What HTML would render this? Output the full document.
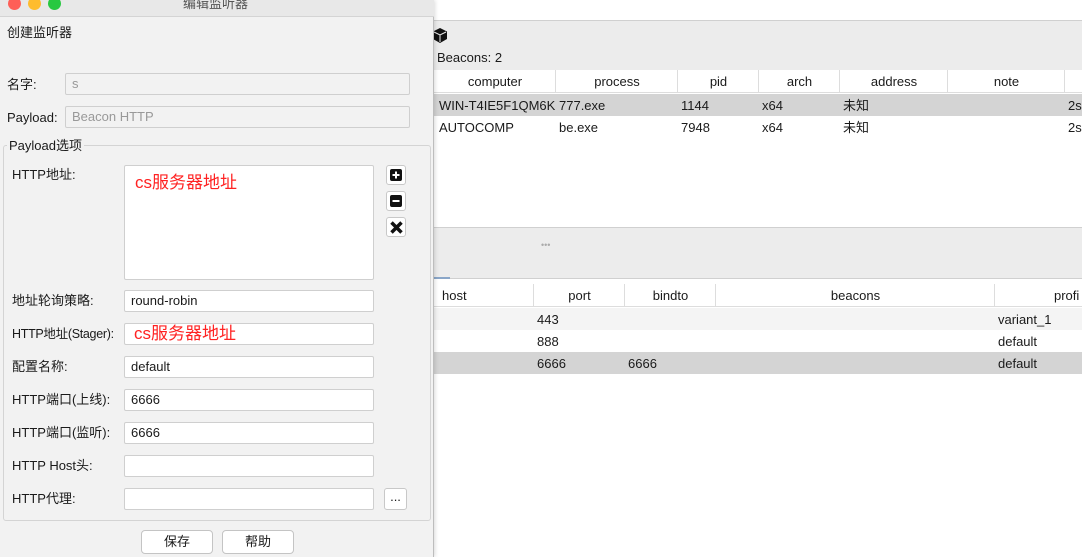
<!DOCTYPE html><html><head><meta charset="utf-8"><style>
*{box-sizing:border-box;margin:0;padding:0}
body{width:1082px;height:557px;overflow:hidden;position:relative;background:#fff;font-family:"Liberation Sans","Noto Sans CJK SC",sans-serif;font-size:13px;line-height:16px;color:#1a1a1a}
.a{position:absolute}
.hd{position:absolute;height:23px;background:#fff;border-bottom:1px solid #ddd}
.hd span,.r span{position:absolute;top:4px;line-height:15px}
.hd span{text-align:center}
.col{border-right:1px solid #ddd;height:23px;top:0}
.r{position:absolute;left:434px;right:0;height:22px}
.in{position:absolute;left:124px;width:250px;height:22px;background:#fff;border:1px solid #cfcfcf;border-radius:2px;padding:2px 6px}
.lb{position:absolute;left:12px}
.ib{position:absolute;left:386px;width:20px;height:20px;border:1px solid #c8c8c8;border-radius:3px;background:#fff}
.ib i{position:absolute;left:3px;top:3px;width:12px;height:12px;background:#111;border-radius:2px}
.btn{position:absolute;top:530px;width:72px;height:24px;background:#fff;border:1px solid #c4c4c4;border-radius:4px;text-align:center;line-height:22px}
.red{color:#f22;font-size:17px;line-height:20px}
</style></head><body>
<div class="a" style="left:434px;top:0;right:0;height:21px;background:#fff;border-bottom:1px solid #d0d0d0"></div>
<div class="a" style="left:434px;top:21px;right:0;height:49px;background:#ececec"></div>
<svg class="a" style="left:433px;top:28px" width="14" height="15" viewBox="0 0 14 15"><path d="M7 0L14 3.5V11L7 15L0 11V3.5Z" fill="#111"/><path d="M1 4L7 7L13 4M7 7V14" stroke="#ececec" stroke-width="1" fill="none"/></svg>
<div class="a" style="left:437px;top:50px">Beacons: 2</div>
<div class="hd" style="left:434px;top:70px;right:0">
<span style="left:0;width:122px">computer</span><span style="left:122px;width:122px">process</span><span style="left:244px;width:81px">pid</span><span style="left:325px;width:81px">arch</span><span style="left:406px;width:108px">address</span><span style="left:514px;width:117px">note</span>
<div class="a col" style="left:121px"></div><div class="a col" style="left:243px"></div><div class="a col" style="left:324px"></div><div class="a col" style="left:405px"></div><div class="a col" style="left:513px"></div><div class="a col" style="left:630px"></div>
</div>
<div class="r" style="top:94px;background:#d4d4d4"><span style="left:5px">WIN-T4IE5F1QM6K</span><span style="left:125px">777.exe</span><span style="left:247px">1144</span><span style="left:328px">x64</span><span style="left:409px">未知</span><span style="left:634px">2s</span></div>
<div class="r" style="top:116px"><span style="left:5px">AUTOCOMP</span><span style="left:125px">be.exe</span><span style="left:247px">7948</span><span style="left:328px">x64</span><span style="left:409px">未知</span><span style="left:634px">2s</span></div>
<div class="a" style="left:434px;top:227px;right:0;height:52px;background:#ececec;border-top:1px solid #d0d0d0;border-bottom:1px solid #d0d0d0"></div>
<div class="a" style="left:541px;top:237px;color:#aaa;font-size:9px">•••</div>
<div class="a" style="left:434px;top:277px;width:16px;height:2px;background:#8aa6c8"></div>
<div class="hd" style="left:434px;top:284px;right:0">
<span style="left:8px">host</span><span style="left:100px;width:91px">port</span><span style="left:191px;width:91px">bindto</span><span style="left:282px;width:279px">beacons</span><span style="left:620px">profi</span>
<div class="a col" style="left:99px"></div><div class="a col" style="left:190px"></div><div class="a col" style="left:281px"></div><div class="a col" style="left:560px"></div>
</div>
<div class="r" style="top:308px;background:#f4f4f4"><span style="left:103px">443</span><span style="left:564px">variant_1</span></div>
<div class="r" style="top:330px"><span style="left:103px">888</span><span style="left:564px">default</span></div>
<div class="r" style="top:352px;background:#d4d4d4"><span style="left:103px">6666</span><span style="left:194px">6666</span><span style="left:564px">default</span></div>
<div class="a" style="left:0;top:0;width:434px;height:557px;background:#f2f2f2;border-right:1px solid #bdbdbd;box-shadow:1px 0 4px rgba(0,0,0,.15)"></div>
<div class="a" style="left:0;top:0;width:434px;height:17px;background:#e8e8e8;border-bottom:1px solid #d4d4d4"></div>
<div class="a" style="left:8px;top:-3px;width:13px;height:13px;border-radius:50%;background:#fe5f57"></div>
<div class="a" style="left:28px;top:-3px;width:13px;height:13px;border-radius:50%;background:#febc2e"></div>
<div class="a" style="left:48px;top:-3px;width:13px;height:13px;border-radius:50%;background:#28c840"></div>
<div class="a" style="left:183px;top:-4px;color:#555">编辑监听器</div>
<div class="a" style="left:7px;top:25px">创建监听器</div>
<div class="lb" style="left:7px;top:77px">名字:</div>
<div class="in" style="left:65px;top:73px;width:345px;background:#f2f2f2;color:#999">s</div>
<div class="lb" style="left:7px;top:110px">Payload:</div>
<div class="in" style="left:65px;top:106px;width:345px;background:#f2f2f2;color:#999">Beacon HTTP</div>
<div class="a" style="left:3px;top:145px;width:428px;height:376px;border:1px solid #d4d4d4;border-radius:3px"></div>
<div class="a" style="left:7px;top:138px;background:#f2f2f2;padding:0 2px">Payload选项</div>
<div class="lb" style="top:167px">HTTP地址:</div>
<div class="in" style="top:165px;height:115px;padding:7px 10px"><span class="red">cs服务器地址</span></div>
<div class="ib" style="top:165px"><i></i><svg class="a" style="left:3px;top:3px" width="12" height="12"><path d="M6 2.5V9.5M2.5 6H9.5" stroke="#fff" stroke-width="2"/></svg></div>
<div class="ib" style="top:191px"><i></i><svg class="a" style="left:3px;top:3px" width="12" height="12"><path d="M2.5 6H9.5" stroke="#fff" stroke-width="2"/></svg></div>
<div class="ib" style="top:217px"><svg class="a" style="left:2px;top:2px" width="15" height="15"><path d="M2.5 2.5L12.5 12.5M12.5 2.5L2.5 12.5" stroke="#111" stroke-width="3.5"/></svg></div>
<div class="lb" style="top:293px">地址轮询策略:</div><div class="in" style="top:290px">round-robin</div>
<div class="lb" style="top:326px;font-size:12.5px;letter-spacing:-0.3px">HTTP地址(Stager):</div><div class="in" style="top:323px;padding:0 9px;line-height:20px"><span class="red">cs服务器地址</span></div>
<div class="lb" style="top:359px">配置名称:</div><div class="in" style="top:356px">default</div>
<div class="lb" style="top:392px">HTTP端口(上线):</div><div class="in" style="top:389px">6666</div>
<div class="lb" style="top:425px">HTTP端口(监听):</div><div class="in" style="top:422px">6666</div>
<div class="lb" style="top:458px">HTTP Host头:</div><div class="in" style="top:455px"></div>
<div class="lb" style="top:491px">HTTP代理:</div><div class="in" style="top:488px"></div>
<div class="ib" style="left:384px;top:488px;width:23px;height:22px;text-align:center;line-height:16px">...</div>
<div class="btn" style="left:141px">保存</div>
<div class="btn" style="left:222px">帮助</div>
</body></html>
